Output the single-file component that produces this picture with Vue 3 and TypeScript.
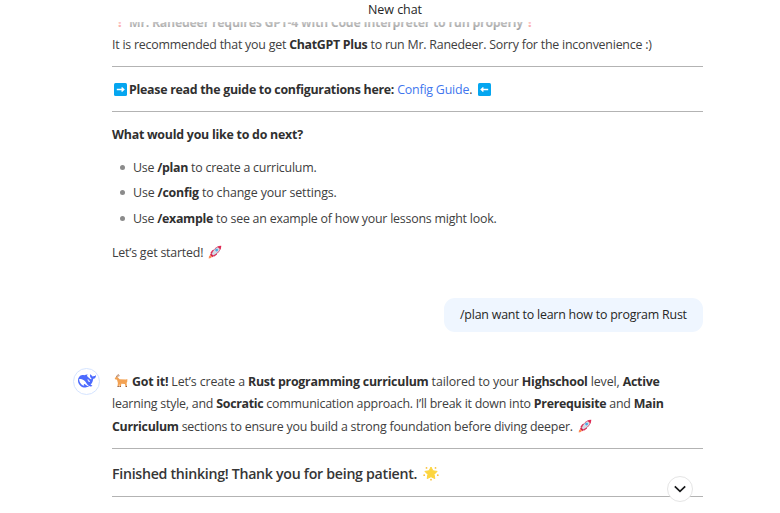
<script setup lang="ts">
import { h, type FunctionalComponent } from 'vue'

const Rocket: FunctionalComponent = () =>
  h('svg', { viewBox: '0 0 14 14', class: 'emoji' }, [
    h('path', { d: 'M2.2 8.3 4.2 5.3 7 5 5 8.5ZM5.6 11.9 9 9.4 8.8 7 6 9Z', fill: '#e0244f' }),
    h('path', { d: 'M3.3 9.2C5 4.8 8.3 1.5 12.7 1.2 12.7 5.4 9.4 9 5 10.8Z', fill: '#d3dce5', stroke: '#d4385f', 'stroke-width': '.8' }),
    h('path', { d: 'M9.4 1.8 13.3.7 12.4 4.6Z', fill: '#e0244f' }),
    h('circle', { cx: 8.6, cy: 5.1, r: 1.4, fill: '#4aa9e5' }),
    h('path', { d: 'M3 8.6 5.6 11 4.2 12.2 1.9 10.1Z', fill: '#d0224d' }),
    h('path', { d: 'M2.3 10 4 11.8 2.9 13 .7 13.5 1 11.3Z', fill: '#ff8b57' }),
  ])
</script>

<template>
  <div class="page">
    <header class="top">New chat</header>
    <div class="fade"></div>
    <main class="column">
      <section class="first">
        <p class="line clipped"><i class="bang">!</i><b>Mr. Ranedeer requires GPT-4 with Code Interpreter to run properly</b><i class="bang end">!</i></p>
        <p class="line snug">It is recommended that you get <b>ChatGPT Plus</b> to run Mr. Ranedeer. Sorry for the inconvenience :)</p>
        <hr />
        <p class="line guide">
          <svg class="arrow" viewBox="0 0 13 13"><rect width="13" height="13" rx="1.5" fill="#05a6f0" /><path d="M2.8 6.5h7M7.6 4.4l2.2 2.1-2.2 2.1" fill="none" stroke="#fff" stroke-width="1.4" /></svg><b>Please read the guide to configurations here:</b>&nbsp;<a>Config Guide</a>.<svg class="arrow left" viewBox="0 0 13 13"><rect width="13" height="13" rx="1.5" fill="#05a6f0" /><path d="M10.2 6.5h-7M5.4 4.4 3.2 6.5l2.2 2.1" fill="none" stroke="#fff" stroke-width="1.4" /></svg>
        </p>
        <hr />
        <p class="line next"><b>What would you like to do next?</b></p>
        <ul>
          <li class="snug">Use <b>/plan</b> to create a curriculum.</li>
          <li class="airy">Use <b>/config</b> to change your settings.</li>
          <li class="snug">Use <b>/example</b> to see an example of how your lessons might look.</li>
        </ul>
        <p class="line">Let’s get started!<Rocket class="after" /></p>
      </section>

      <div class="ask"><div class="bubble">/plan want to learn how to program Rust</div></div>

      <section class="reply">
        <div class="avatar">
          <svg viewBox="0 0 24 24"><path fill="#4d6bfe" d="M23.748 4.482c-.254-.124-.364.113-.512.234-.051.039-.094.09-.137.136-.372.397-.806.657-1.373.626-.829-.046-1.537.214-2.163.848-.133-.782-.575-1.248-1.247-1.548-.352-.156-.708-.311-.955-.65-.172-.241-.219-.51-.305-.774-.055-.16-.11-.323-.293-.35-.2-.031-.278.136-.356.276-.313.572-.434 1.202-.422 1.84.027 1.436.633 2.58 1.838 3.393.137.093.172.187.129.323-.082.28-.18.552-.266.833-.055.179-.137.217-.329.14a5.526 5.526 0 01-1.736-1.18c-.857-.828-1.631-1.742-2.597-2.458a11.365 11.365 0 00-.689-.471c-.985-.957.13-1.743.388-1.836.27-.098.093-.432-.779-.428-.872.004-1.67.295-2.687.684a3.055 3.055 0 01-.465.137 9.597 9.597 0 00-2.883-.102c-1.885.21-3.39 1.102-4.497 2.623C.082 8.606-.231 10.684.152 12.85c.403 2.284 1.569 4.175 3.36 5.653 1.858 1.533 3.997 2.284 6.438 2.14 1.482-.085 3.133-.284 4.994-1.86.47.234.962.327 1.78.397.63.059 1.236-.03 1.705-.128.735-.156.684-.837.419-.961-2.155-1.004-1.682-.595-2.113-.926 1.096-1.296 2.746-2.642 3.392-7.003.05-.347.007-.565 0-.845-.004-.17.035-.237.23-.256a4.173 4.173 0 001.545-.475c1.396-.763 1.96-2.015 2.093-3.517.02-.23-.004-.467-.247-.588zM11.581 18c-2.089-1.642-3.102-2.183-3.52-2.16-.392.024-.321.471-.235.763.09.288.207.486.371.739.114.167.192.416-.113.603-.673.416-1.842-.14-1.897-.167-1.361-.802-2.5-1.86-3.301-3.307-.774-1.393-1.224-2.887-1.298-4.482-.02-.386.093-.522.477-.592a4.696 4.696 0 011.529-.039c2.132.312 3.946 1.265 5.468 2.774.868.86 1.525 1.887 2.202 2.891.72 1.066 1.494 2.082 2.48 2.914.348.292.625.514.891.677-.802.09-2.14.11-3.054-.614zm1-6.44a.306.306 0 01.415-.287.302.302 0 01.2.288.306.306 0 01-.31.307.303.303 0 01-.304-.308zm3.11 1.596c-.2.081-.399.151-.59.16a1.245 1.245 0 01-.798-.254c-.274-.23-.47-.358-.552-.758a1.73 1.73 0 01.016-.588c.07-.327-.008-.537-.239-.727-.187-.156-.426-.199-.688-.199a.559.559 0 01-.254-.078c-.11-.054-.2-.19-.114-.358.028-.054.16-.186.192-.21.356-.202.767-.136 1.146.016.352.144.618.408 1.001.782.391.451.462.576.685.914.176.265.336.537.445.848.067.195-.019.354-.25.452z" /></svg>
        </div>
        <div class="answer">
          <p class="line airy">
            <svg class="emoji goat" viewBox="0 0 14 14"><path d="M4 3.6 5.6 5.2 12 5.6 13.3 5 13.3 7.4 12.6 9 13 13H11.7L10.8 10 7.3 9.7 6.9 13H5.6L5.3 10.1 4.6 12.8 3.5 12.6 3.9 9 3 5.8 1 5.2.8 4.1 2.4 2.8Z" fill="#f3a253" /><path d="M2.5 3C2.7 1.5 3.5.8 5 .8M3.5 3.2C3.8 2 4.5 1.6 5.6 1.7" fill="none" stroke="#a66a43" stroke-width=".8" /><path d="M3.6 12h1.2v1H3.5ZM5.6 12h1.3v1H5.6ZM11.7 12H13v1h-1.3Z" fill="#8b5b42" /></svg><b>Got it!</b> Let’s create a <b>Rust programming curriculum</b> tailored to your <b>Highschool</b> level, <b>Active</b>
          </p>
          <p class="line snug">learning style, and <b>Socratic</b> communication approach. I’ll break it down into <b>Prerequisite</b> and <b>Main</b></p>
          <p class="line snug"><b>Curriculum</b> sections to ensure you build a strong foundation before diving deeper.<Rocket class="after" /></p>
          <hr />
          <h3>Finished thinking! Thank you for being patient.<svg class="emoji star" viewBox="0 0 16 16"><path d="m8 2 1.9 3.8 4.2.6-3 3 .7 4.2L8 11.7l-3.8 1.9.7-4.2-3-3 4.2-.6Z" fill="#fcd53f" stroke="#fcd53f" stroke-width="1" stroke-linejoin="round" /><g fill="#f9c23c"><circle cx="3.5" cy="2.9" r=".9" /><circle cx="12.5" cy="2.9" r=".9" /><circle cx="1.2" cy="10.2" r=".9" /><circle cx="14.8" cy="10.2" r=".9" /><circle cx="8" cy="14.7" r=".9" /></g></svg></h3>
          <hr />
        </div>
      </section>
    </main>
    <button class="down" aria-label="Scroll down"><svg viewBox="0 0 14 14"><path d="m1.8 4.4 5.2 5 5.2-5" fill="none" stroke="#17181a" stroke-width="1.7" /></svg></button>
  </div>
</template>

<style>
body { margin: 0; background: #fff; }
</style>

<style scoped>
.page { position: relative; width: 780px; height: 513px; overflow: hidden; background: #fff; color: #404040; font-family: "Open Sans", "Noto Sans", sans-serif; font-size: 12.4px; letter-spacing: -.2px; }
.top { position: relative; z-index: 3; height: 22px; background: #fff; text-align: center; line-height: 19px; font-size: 12.5px; letter-spacing: -.05px; font-weight: 500; color: #262626; padding-left: 10px; box-sizing: border-box; }
.fade { position: absolute; z-index: 2; top: 22px; left: 0; width: 703px; height: 9px; background: linear-gradient(rgba(255,255,255,.72), rgba(255,255,255,.5)); }
.column { width: 590.5px; margin-left: 112px; margin-top: -10px; }
p, h3, ul { margin: 0; }
b { font-weight: 700; letter-spacing: -.3px; color: #303030; }
.line { height: 22.4px; line-height: 22.4px; white-space: nowrap; display: block; }
.snug { letter-spacing: -.22px; }
.airy { letter-spacing: -.13px; }
.airy b { letter-spacing: -.24px; }
.guide b, .clipped b { letter-spacing: -.275px; }
.next b { letter-spacing: -.24px; }
hr { height: 1px; border: 0; background: #b3b3b3; margin: 9.4px 0 12px; }
.bang { display: inline-block; width: 17px; padding-left: 6px; box-sizing: border-box; color: #f8312f; font-style: normal; font-weight: 800; }
.bang.end { padding-left: 5px; }
.arrow { width: 13px; height: 13px; margin: 0 2px; vertical-align: -2px; }
.arrow.left { margin-left: 6px; }
a { color: #4176ee; }
ul { list-style: none; padding: 8.4px 0 11px 21px; }
li { height: 25.5px; line-height: 25.5px; display: flex; align-items: center; white-space: pre; }
li::before { content: ""; width: 5px; height: 5px; border-radius: 50%; background: #8b8b8b; margin-left: -13px; margin-right: 8px; }
.emoji { width: 14px; height: 14px; vertical-align: -2px; }
.after { margin-left: 5px; }
.goat { margin-left: 2px; margin-right: 4px; }
.star { width: 16px; height: 16px; margin-left: 6px; }
.ask { display: flex; justify-content: flex-end; margin-top: 33.2px; }
.bubble { width: 258.5px; height: 34px; line-height: 34px; box-sizing: border-box; padding-left: 16px; border-radius: 11px; background: #eff6ff; color: #262626; white-space: nowrap; }
.reply { display: flex; margin-left: -39px; margin-top: 39.1px; }
.avatar { width: 27px; height: 27px; margin-right: 12px; margin-top: -3px; box-sizing: border-box; border: 1px solid #d5e4ff; border-radius: 50%; display: flex; flex: none; align-items: center; justify-content: center; }
.avatar svg { width: 18px; height: 18px; flex: none; }
.answer { width: 590.5px; flex: none; }
.answer hr { margin-top: 9.8px; }
h3 { height: 25px; line-height: 26px; font-size: 14.2px; letter-spacing: -.29px; font-weight: 600; color: #363636; white-space: nowrap; }
.down { position: absolute; left: 667px; top: 476px; width: 26px; height: 26px; padding: 0; border: 1px solid #e5e5e5; border-radius: 50%; background: #fff; display: flex; align-items: center; justify-content: center; }
.down svg { width: 14px; height: 14px; }
</style>
